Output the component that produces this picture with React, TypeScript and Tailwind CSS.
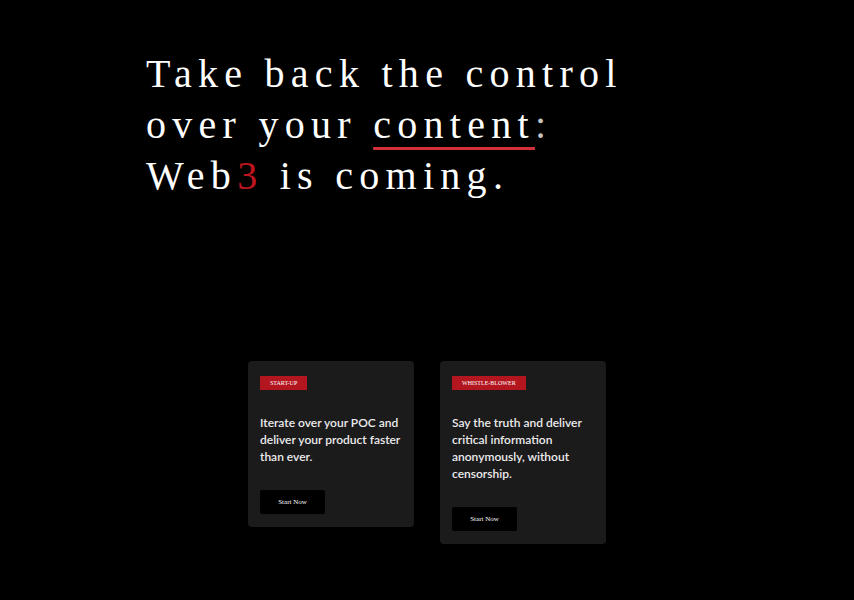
export default function App() {
  const cards = [
    {
      tag: "START-UP",
      text: "Iterate over your POC and deliver your product faster than ever.",
    },
    {
      tag: "WHISTLE-BLOWER",
      text: "Say the truth and deliver critical information anonymously, without censorship.",
    },
  ]

  return (
    <div className="min-h-[600px] w-full bg-black">
      {/* HERO */}
      <div className="pl-[146px] pt-[48px]">
        <h1 className="[font-family:'Liberation_Serif',serif] text-[40px] leading-[51px] tracking-[0.157em] text-white font-normal">
          Take back the control
          <br />
          over your{" "}
          <span className="underline decoration-[#d3313a] decoration-[3px] underline-offset-[9px]">content</span>
          <span className="text-[#c4c4c4]">:</span>
          <br />
          Web<span className="text-[#c0141e]">3</span> is coming.
        </h1>
      </div>

      {/* CARDS */}
      <div className="flex justify-center items-start gap-[26px] mt-[160px]">
        {cards.map((card, i) => (
          <div key={i} className="w-[166px] rounded-[4px] bg-[#1c1b1c] px-[12px] pt-[15px] pb-[13px]">
            <div className="flex w-fit h-[14px] items-center bg-[#b3161f] px-[10px] [font-family:'Liberation_Serif',serif] text-[6px] leading-none text-white">
              {card.tag}
            </div>
            <p className="mt-[24px] [font-family:Lato,sans-serif] text-[12px] leading-[17px] text-[#ececec] font-semibold">
              {card.text}
            </p>
            <button className="mt-[25px] flex w-[65px] h-[24px] items-center justify-center rounded-[2px] bg-black [font-family:'Liberation_Serif',serif] text-[7px] text-white">
              Start Now
            </button>
          </div>
        ))}
      </div>
    </div>
  )
}
